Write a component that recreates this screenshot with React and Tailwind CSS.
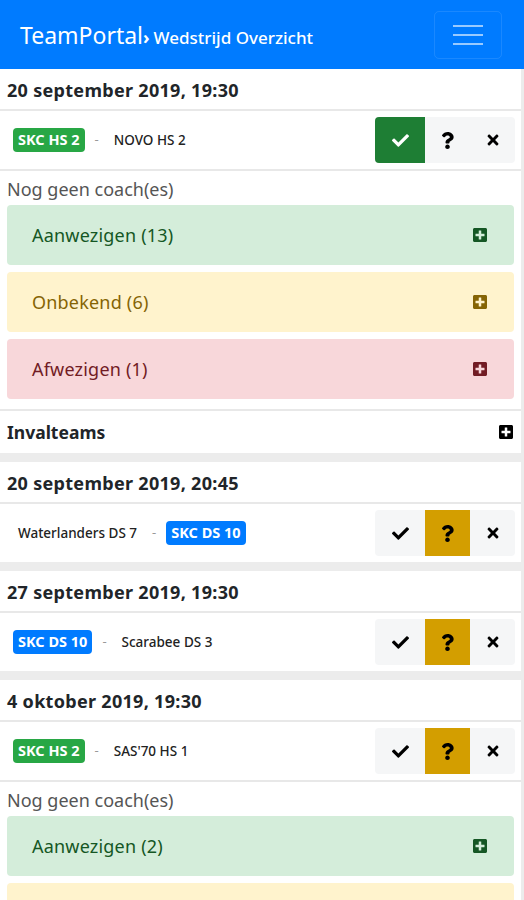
import { FaCheck, FaTimes, FaQuestion, FaPlusSquare } from "react-icons/fa";

const matches = [
  {
    id: 1,
    date: "20 september 2019, 19:30",
    home: { name: "SKC HS 2", color: "green" },
    away: { name: "NOVO HS 2" },
    status: "yes",
    details: { aanwezig: 13, onbekend: 6, afwezig: 1 },
    invalteams: true,
  },
  {
    id: 2,
    date: "20 september 2019, 20:45",
    home: { name: "Waterlanders DS 7" },
    away: { name: "SKC DS 10", color: "blue" },
    status: "maybe",
  },
  {
    id: 3,
    date: "27 september 2019, 19:30",
    home: { name: "SKC DS 10", color: "blue" },
    away: { name: "Scarabee DS 3" },
    status: "maybe",
  },
  {
    id: 4,
    date: "4 oktober 2019, 19:30",
    home: { name: "SKC HS 2", color: "green" },
    away: { name: "SAS'70 HS 1" },
    status: "maybe",
    details: { aanwezig: 2, onbekend: 4, afwezig: 0 },
  },
];

function Team({ team }) {
  if (team.color) {
    return (
      <span
        className={`rounded-[4px] px-[5px] py-[1px] text-[14.5px] font-bold text-white ${
          team.color === "green" ? "bg-[#28a745]" : "bg-[#007bff]"
        }`}
      >
        {team.name}
      </span>
    );
  }
  return <span className="px-[5px] text-[13.5px] font-medium text-[#222]">{team.name}</span>;
}

function Availability({ status }) {
  return (
    <div className="flex h-[46px] w-[140px] rounded-[4px] bg-[#f5f6f7] text-[18px]">
      <button
        className={`flex w-[50px] items-center justify-center rounded-l-[4px] ${
          status === "yes" ? "bg-[#1e7e34] text-white" : "text-black"
        }`}
      >
        <FaCheck className="text-[17px]" />
      </button>
      <button
        className={`flex w-[45px] items-center justify-center ${
          status === "maybe" ? "bg-[#d39e00]" : ""
        }`}
      >
        <FaQuestion className="text-[17px] text-black" />
      </button>
      <button className="flex w-[45px] items-center justify-center text-black">
        <FaTimes className="text-[16px]" />
      </button>
    </div>
  );
}

function Alert({ bg, fg, label }) {
  return (
    <div
      className={`flex h-[60px] items-center justify-between rounded-[4px] pl-[25px] pr-[26px] text-[18px] tracking-[0.2px] ${bg} ${fg}`}
    >
      <span>{label}</span>
      <FaPlusSquare className="text-[16px]" />
    </div>
  );
}

function MatchCard({ match }) {
  return (
    <div className="mb-[9px] mr-[3px] bg-white">
      <div className="flex h-[42px] items-center border-b-2 border-[#e8e8e8] px-[7px] pt-[2px] text-[18px] font-bold tracking-[0.3px] text-[#212529]">
        {match.date}
      </div>

      <div className="flex h-[58px] items-center justify-between pl-[13px] pr-[6px]">
        <div className="flex items-center gap-[10px]">
          <Team team={match.home} />
          <span className="text-[13px] text-[#999]">-</span>
          <Team team={match.away} />
        </div>
        <Availability status={match.status} />
      </div>

      {match.details && (
        <div className="border-t-2 border-[#e8e8e8] px-[7px] pb-[10px]">
          <p className="pb-[2px] pt-[5px] text-[18px] text-[#555]">Nog geen coach(es)</p>
          <div className="flex flex-col gap-[7px]">
            <Alert
              bg="bg-[#d4edda]"
              fg="text-[#155724]"
              label={`Aanwezigen (${match.details.aanwezig})`}
            />
            <Alert
              bg="bg-[#fff3cd]"
              fg="text-[#856404]"
              label={`Onbekend (${match.details.onbekend})`}
            />
            <Alert
              bg="bg-[#f8d7da]"
              fg="text-[#721c24]"
              label={`Afwezigen (${match.details.afwezig})`}
            />
          </div>
        </div>
      )}

      {match.invalteams && (
        <div className="flex h-[44px] items-center justify-between border-t-2 border-[#e8e8e8] px-[7px] text-[17.5px] font-bold text-[#212529]">
          <span>Invalteams</span>
          <FaPlusSquare className="text-[16px] text-black" />
        </div>
      )}
    </div>
  );
}

export default function App() {
  return (
    <div className="min-h-screen bg-[#ececec] font-['Noto_Sans',sans-serif]">
      {/* Navbar */}
      <nav className="flex h-[69px] items-center justify-between bg-[#007bff] pl-[20px] pr-[22px]">
        <div className="flex items-baseline pt-[2px] text-white">
          <span className="text-[23px]">TeamPortal</span>
          <span className="text-[18px] font-bold">›</span>
          <span className="ml-[4px] text-[17px] font-medium">Wedstrijd Overzicht</span>
        </div>
        <button className="flex h-[48px] w-[68px] flex-col items-center justify-center gap-[7px] rounded-[5px] border border-white/10">
          <span className="h-[2px] w-[30px] bg-white/60" />
          <span className="h-[2px] w-[30px] bg-white/60" />
          <span className="h-[2px] w-[30px] bg-white/60" />
        </button>
      </nav>

      {matches.map((m) => (
        <MatchCard key={m.id} match={m} />
      ))}
    </div>
  );
}
